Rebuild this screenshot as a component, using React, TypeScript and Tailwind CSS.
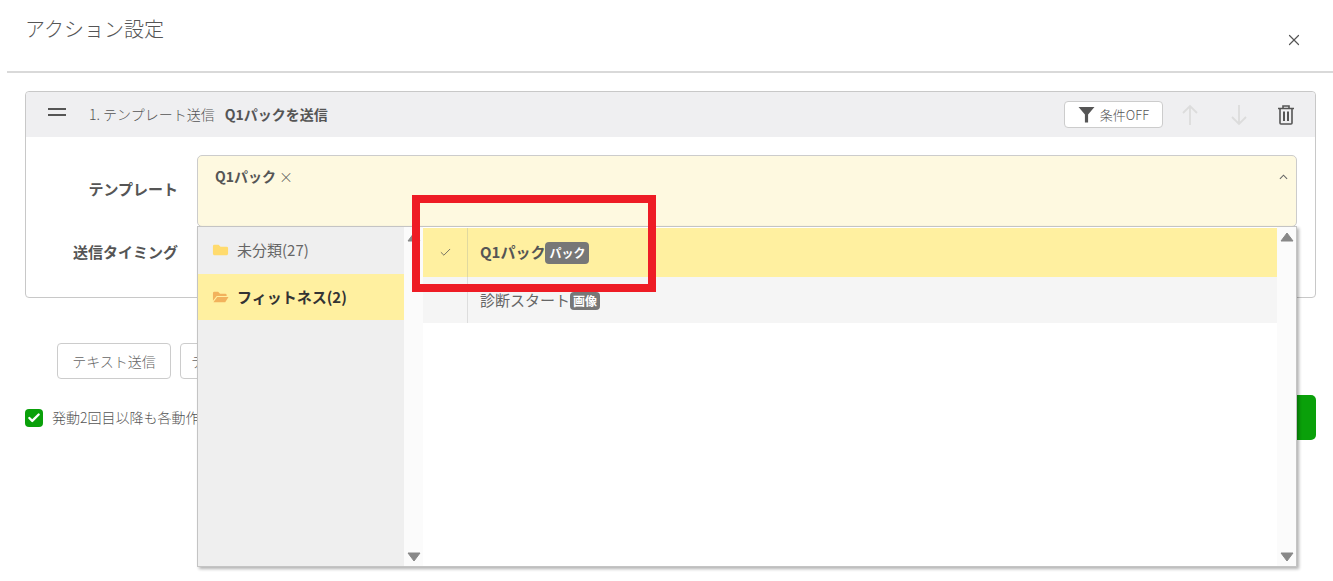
import React from 'react';
import { X, Check } from 'lucide-react';

const FONT = '"Noto Sans CJK JP", "Noto Sans", sans-serif';

function TriangleUp({ className }: { className?: string }) {
  return (
    <svg viewBox="0 0 14 10" className={className}>
      <path d="M7 1 L13 9 H1 Z" fill="#888888" stroke="#888888" strokeLinejoin="round" />
    </svg>
  );
}

function TriangleDown({ className }: { className?: string }) {
  return (
    <svg viewBox="0 0 14 10" className={className}>
      <path d="M1 1 H13 L7 9 Z" fill="#888888" stroke="#888888" strokeLinejoin="round" />
    </svg>
  );
}

function Dropdown() {
  return (
    <div className="absolute left-[-1px] top-[70px] z-10 flex h-[341px] w-[1100px] border border-[#c4c4c4] bg-white shadow-[2px_2px_3px_rgba(0,0,0,0.3)]">
      {/* Folders */}
      <div className="w-[206px] shrink-0 bg-[#efefef]">
        <div className="flex h-[47px] items-center pb-[1px] pl-[14px] text-[15px] text-[#666]">
          <svg viewBox="0 0 18 14" className="mr-[8px] h-[14px] w-[17px]">
            <path d="M1 3 a1.5 1.5 0 0 1 1.5 -1.5 H7 L9 3.5 H15.5 a1.5 1.5 0 0 1 1.5 1.5 V11 a1.5 1.5 0 0 1 -1.5 1.5 H2.5 A1.5 1.5 0 0 1 1 11 Z" fill="#ffdb6e" />
          </svg>
          未分類(27)
        </div>
        <div className="flex h-[46px] items-center bg-[#fff0a0] pl-[14px] text-[15px] font-bold text-[#333]">
          <svg viewBox="0 0 18 14" className="mr-[8px] h-[14px] w-[17px]">
            <path d="M1 3 a1.5 1.5 0 0 1 1.5 -1.5 H6.5 L8.5 3.5 H14 a1.5 1.5 0 0 1 1.5 1.5 V6 H5 L1 11 Z" fill="#f2b25c" />
            <path d="M5.5 7 H17.5 L14 12.5 H1.5 Z" fill="#f2b25c" />
          </svg>
          フィットネス(2)
        </div>
      </div>
      {/* Folder scrollbar */}
      <div className="flex w-[19px] shrink-0 flex-col items-center justify-between bg-[#fbfbfb] pb-[4px] pt-[5px]">
        <TriangleUp className="h-[10px] w-[14px]" />
        <TriangleDown className="h-[10px] w-[14px]" />
      </div>
      {/* Templates */}
      <div className="min-w-0 flex-1 pt-[1px]">
        <div className="flex h-[49px] items-center bg-[#fff0a0] text-[15px] font-bold text-[#555]">
          <div className="flex h-full w-[45px] shrink-0 items-center justify-center border-r border-[#e0d9a0]">
            <Check className="h-[13px] w-[13px] text-[#555]" strokeWidth={1.5} />
          </div>
          <span className="ml-[12px]">Q1パック</span>
          <span className="rounded-[4px] bg-[#777] px-[4px] py-[2px] text-[12px] leading-[18px] text-white">パック</span>
        </div>
        <div className="flex h-[46px] items-center bg-[#f5f5f5] text-[15px] text-[#666]">
          <div className="h-full w-[45px] shrink-0 border-r border-[#ddd]" />
          <span className="ml-[12px]">診断スタート</span>
          <span className="mt-[2px] rounded-[4px] bg-[#777] px-[3px] text-[12px] font-bold leading-[18px] text-white">画像</span>
        </div>
      </div>
      {/* Template scrollbar */}
      <div className="flex w-[19px] shrink-0 flex-col items-center justify-between bg-[#fbfbfb] pb-[4px] pt-[5px]">
        <TriangleUp className="h-[10px] w-[14px]" />
        <TriangleDown className="h-[10px] w-[14px]" />
      </div>
    </div>
  );
}

function App() {
  return (
    <div className="relative h-[581px] w-[1333px] overflow-hidden bg-white" style={{ fontFamily: FONT }}>
      {/* Header */}
      <div className="ml-[7px] flex h-[73px] items-start justify-between border-b-2 border-[#d9d9d9] pl-[18px] pr-[30px]">
        <h1 className="mt-[14px] text-[20px] font-light leading-[30px] text-[#555]">アクション設定</h1>
        <X className="mt-[31px] h-[18px] w-[18px] text-[#555]" strokeWidth={1.6} />
      </div>

      <div className="px-[17px] pl-[25px] pt-[18px]">
        {/* Action card */}
        <div className="h-[207px] rounded-[4px] border border-[#c8c8c8]">
          <div className="flex h-[45px] items-center rounded-t-[4px] bg-[#efeff1] pl-[22px] pr-[21px]">
            <div className="mb-[6px] flex w-[18px] flex-col gap-[4px]">
              <div className="h-[2px] bg-[#555]" />
              <div className="h-[2px] bg-[#555]" />
            </div>
            <span className="ml-[23px] text-[14px] font-light text-[#555]">1. テンプレート送信</span>
            <span className="ml-[10px] text-[14px] font-bold text-[#555]">Q1パックを送信</span>
            <div className="ml-auto flex items-center">
              <button className="flex h-[27px] w-[99px] items-center justify-center rounded-[4px] border border-[#ccc] bg-white text-[13px] font-light text-[#555]">
                <svg viewBox="0 0 16 16" className="mr-[5px] h-[17px] w-[17px]">
                  <path d="M0.5 1 H15.5 L9.5 8 V15.5 H6.5 V8 Z" fill="#555" />
                </svg>
                条件OFF
              </button>
              <svg viewBox="0 0 20 24" className="ml-[17px] h-[24px] w-[20px]" fill="none" stroke="#dcdcdc" strokeWidth="1.8">
                <path d="M10 22 V3 M3 10 L10 3 L17 10" />
              </svg>
              <svg viewBox="0 0 20 24" className="ml-[29px] h-[24px] w-[20px]" fill="none" stroke="#dcdcdc" strokeWidth="1.8">
                <path d="M10 2 V21 M3 14 L10 21 L17 14" />
              </svg>
              <svg viewBox="0 0 16 20" className="ml-[29px] h-[20px] w-[16px]" fill="none" stroke="#555" strokeWidth="1.6">
                <path d="M0 3.5 H16 M5 3.5 V1 H11 V3.5" />
                <path d="M2 3.5 V18 a1 1 0 0 0 1 1 H13 a1 1 0 0 0 1 -1 V3.5" />
                <path d="M6 6.5 V16 M10 6.5 V16" strokeWidth="2" />
              </svg>
            </div>
          </div>

          <div className="pr-[18px] pt-[18px]">
            <div className="flex items-start">
              <div className="mt-[23px] w-[152px] shrink-0 text-right text-[15px] font-bold leading-[22px] text-[#555]">テンプレート</div>
              <div className="relative ml-[19px] flex h-[72px] flex-1 items-start justify-between rounded-[5px] border border-[#ccc] bg-[#fef9e0] pl-[17px] pr-[8px] pt-[9px]">
                <span className="text-[14px] leading-[22px] text-[#555]">
                  <span className="font-bold">Q1パック</span>
                  <span className="ml-[3px] font-light">×</span>
                </span>
                <svg viewBox="0 0 10 6" className="mt-[9px] h-[6px] w-[9px]" fill="none" stroke="#666" strokeWidth="1.2">
                  <path d="M1 5 L5 1 L9 5" />
                </svg>
                <Dropdown />
              </div>
            </div>
            <div className="mt-[14px] w-[152px] text-right text-[15px] font-bold leading-[22px] text-[#555]">送信タイミング</div>
          </div>
        </div>

        {/* Add buttons */}
        <div className="ml-[32px] mt-[45px] flex gap-[9px]">
          <button className="h-[36px] w-[114px] rounded-[4px] border border-[#ccc] text-[14px] font-light text-[#666]">テキスト送信</button>
          <button className="h-[36px] w-[114px] rounded-[4px] border border-[#ccc] pl-[10px] text-left text-[14px] font-light text-[#666]">テンプレート</button>
        </div>

        {/* Footer */}
        <div className="mt-[16px] flex h-[45px] items-center justify-between">
          <div className="flex items-center">
            <div className="flex h-[18px] w-[18px] items-center justify-center rounded-[4px] bg-[#0aa00a]">
              <Check className="h-[14px] w-[14px] text-white" strokeWidth={4} />
            </div>
            <span className="ml-[9px] text-[14px] font-light text-[#555]">発動2回目以降も各動作を実行する</span>
          </div>
          <button className="h-[45px] w-[120px] rounded-[5px] bg-[#0aa00a]" />
        </div>
      </div>

      {/* Red annotation box */}
      <div className="absolute left-[412px] top-[195px] z-20 h-[97px] w-[244px] border-[8px] border-[#ee1c25]" />
    </div>
  );
}

export default App;
